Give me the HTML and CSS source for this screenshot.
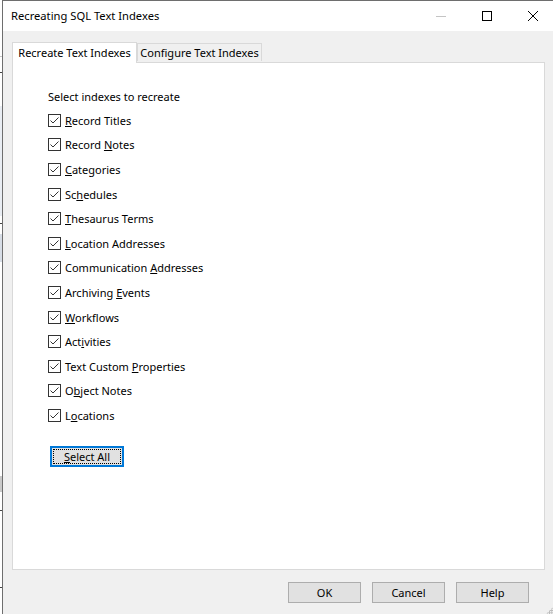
FILE: index.html
```html
<!DOCTYPE html>
<html>
<head>
<meta charset="utf-8">
<link rel="stylesheet" href="styles.css">
</head>
<body>
<div class="screen">
  <div class="outside">
    <div class="o-gap h56"></div>
    <div class="o-line"></div>
    <div class="o-gap h15"></div>
    <div class="o-dark"></div>
    <div class="o-gap h33"></div>
    <div class="o-block h110"></div>
    <div class="o-gap h7"></div>
    <div class="o-dark"></div>
    <div class="o-gap h10"></div>
    <div class="o-block2 h28"></div>
    <div class="o-gap h214"></div>
    <div class="o-block3 h15"></div>
    <div class="o-line"></div>
    <div class="o-gap h18"></div>
    <div class="o-dark"></div>
    <div class="o-gap h76"></div>
    <div class="o-dark"></div>
  </div>
  <div class="window">
    <div class="titlebar">
      <span class="title">Recreating SQL Text Indexes</span>
      <div class="caption">
        <div class="cbtn"><svg width="10" height="10" viewBox="0 0 10 10"><path d="M0 5.5H10" stroke="#c4c4c4" stroke-width="1"/></svg></div>
        <div class="cbtn"><svg width="10" height="10" viewBox="0 0 10 10"><rect x="0.5" y="0.5" width="9" height="9" fill="none" stroke="#000" stroke-width="1"/></svg></div>
        <div class="cbtn"><svg width="10" height="10" viewBox="0 0 10 10"><path d="M0 0L10 10M10 0L0 10" stroke="#000" stroke-width="1"/></svg></div>
      </div>
    </div>
    <div class="body">
      <div class="tabs">
        <div class="tab active">Recreate Text Indexes</div>
        <div class="tab">Configure Text Indexes</div>
      </div>
      <div class="panel">
        <div class="heading">Select indexes to recreate</div>
        <div class="list">
          <div class="row"><span class="box"><svg width="11" height="11" viewBox="0 0 11 11"><path d="M1.5 5.5L4 8L9.5 2.5" fill="none" stroke="#333" stroke-width="1"/></svg></span><span class="lbl"><u>R</u>ecord Titles</span></div>
          <div class="row"><span class="box"><svg width="11" height="11" viewBox="0 0 11 11"><path d="M1.5 5.5L4 8L9.5 2.5" fill="none" stroke="#333" stroke-width="1"/></svg></span><span class="lbl">Record <u>N</u>otes</span></div>
          <div class="row"><span class="box"><svg width="11" height="11" viewBox="0 0 11 11"><path d="M1.5 5.5L4 8L9.5 2.5" fill="none" stroke="#333" stroke-width="1"/></svg></span><span class="lbl"><u>C</u>ategories</span></div>
          <div class="row"><span class="box"><svg width="11" height="11" viewBox="0 0 11 11"><path d="M1.5 5.5L4 8L9.5 2.5" fill="none" stroke="#333" stroke-width="1"/></svg></span><span class="lbl">Sc<u>h</u>edules</span></div>
          <div class="row"><span class="box"><svg width="11" height="11" viewBox="0 0 11 11"><path d="M1.5 5.5L4 8L9.5 2.5" fill="none" stroke="#333" stroke-width="1"/></svg></span><span class="lbl"><u>T</u>hesaurus Terms</span></div>
          <div class="row"><span class="box"><svg width="11" height="11" viewBox="0 0 11 11"><path d="M1.5 5.5L4 8L9.5 2.5" fill="none" stroke="#333" stroke-width="1"/></svg></span><span class="lbl"><u>L</u>ocation Addresses</span></div>
          <div class="row"><span class="box"><svg width="11" height="11" viewBox="0 0 11 11"><path d="M1.5 5.5L4 8L9.5 2.5" fill="none" stroke="#333" stroke-width="1"/></svg></span><span class="lbl">Communication <u>A</u>ddresses</span></div>
          <div class="row"><span class="box"><svg width="11" height="11" viewBox="0 0 11 11"><path d="M1.5 5.5L4 8L9.5 2.5" fill="none" stroke="#333" stroke-width="1"/></svg></span><span class="lbl">Archiving <u>E</u>vents</span></div>
          <div class="row"><span class="box"><svg width="11" height="11" viewBox="0 0 11 11"><path d="M1.5 5.5L4 8L9.5 2.5" fill="none" stroke="#333" stroke-width="1"/></svg></span><span class="lbl"><u>W</u>orkflows</span></div>
          <div class="row"><span class="box"><svg width="11" height="11" viewBox="0 0 11 11"><path d="M1.5 5.5L4 8L9.5 2.5" fill="none" stroke="#333" stroke-width="1"/></svg></span><span class="lbl">Act<u>i</u>vities</span></div>
          <div class="row"><span class="box"><svg width="11" height="11" viewBox="0 0 11 11"><path d="M1.5 5.5L4 8L9.5 2.5" fill="none" stroke="#333" stroke-width="1"/></svg></span><span class="lbl">Text Custom <u>P</u>roperties</span></div>
          <div class="row"><span class="box"><svg width="11" height="11" viewBox="0 0 11 11"><path d="M1.5 5.5L4 8L9.5 2.5" fill="none" stroke="#333" stroke-width="1"/></svg></span><span class="lbl">O<u>b</u>ject Notes</span></div>
          <div class="row"><span class="box"><svg width="11" height="11" viewBox="0 0 11 11"><path d="M1.5 5.5L4 8L9.5 2.5" fill="none" stroke="#333" stroke-width="1"/></svg></span><span class="lbl">L<u>o</u>cations</span></div>
        </div>
        <div class="selectall"><span class="focus"><u>S</u>elect All</span></div>
      </div>
      <div class="buttons">
        <div class="btn">OK</div>
        <div class="btn">Cancel</div>
        <div class="btn">Help</div>
      </div>
      <div class="grip"></div>
    </div>
  </div>
</div>
</body>
</html>
```

FILE: styles.css
```css
* { box-sizing: border-box; }
html, body { margin: 0; padding: 0; }
body {
  width: 553px;
  height: 614px;
  overflow: hidden;
  font-family: "Noto Sans", "Open Sans", sans-serif;
  font-size: 11px;
  color: #000;
  background: #fff;
}
.screen {
  display: flex;
  width: 553px;
  height: 614px;
}
.outside {
  width: 2px;
  flex: none;
  display: flex;
  flex-direction: column;
  background: #fff;
}
.o-gap { flex: none; }
.o-line { height: 1px; background: #c8c8c8; }
.o-dark { height: 1px; background: #444; }
.o-block { background: #e9edf3; }
.o-block2 { background: #d7dde6; }
.o-block3 { background: #c9c9c9; }
.h7 { height: 7px; } .h10 { height: 10px; } .h15 { height: 15px; } .h18 { height: 18px; }
.h28 { height: 28px; } .h33 { height: 33px; } .h56 { height: 56px; } .h76 { height: 76px; }
.h110 { height: 110px; } .h214 { height: 214px; }

.window {
  flex: 1;
  display: flex;
  flex-direction: column;
  border-left: 1px solid #6e6e6e;
  border-top: 1px solid #6e6e6e;
  margin-right: -3px;
  min-width: 0;
}
.titlebar {
  height: 30px;
  flex: none;
  display: flex;
  align-items: center;
  background: #fff;
}
.title {
  padding-left: 8px;
  flex: 1;
  font-size: 11.2px;
  line-height: 30px;
  padding-bottom: 1px;
}
.caption { display: flex; height: 30px; }
.cbtn {
  width: 46px;
  height: 30px;
  display: flex;
  align-items: center;
  justify-content: center;
}
.cbtn svg { display: block; }

.body {
  flex: 1;
  background: #f0f0f0;
  padding: 10px 11px 0 9px;
  display: flex;
  flex-direction: column;
  position: relative;
}
.tabs {
  display: flex;
  align-items: flex-end;
  height: 21px;
  position: relative;
  z-index: 1;
}
.tab {
  height: 18px;
  padding: 0 2px;
  border: 1px solid #d9d9d9;
  border-bottom: none;
  background: #f0f0f0;
  line-height: 18px;
  white-space: nowrap;
  width: 125px;
  margin-bottom: 1px;
  text-align: center;
}
.tab.active {
  height: 21px;
  width: 125px;
  background: #fff;
  margin-bottom: -1px;
  line-height: 19px;
}
.panel {
  height: 508px;
  flex: none;
  background: #fff;
  border: 1px solid #d9d9d9;
  padding: 25px 0 0 35px;
}
.heading { line-height: 17px; height: 20px; }
.list { display: flex; flex-direction: column; }
.row {
  height: 24.6px;
  display: flex;
  align-items: center;
}
.box {
  width: 13px;
  height: 13px;
  border: 1px solid #333;
  background: #fff;
  flex: none;
  display: flex;
}
.box svg { display: block; }
.lbl { padding-left: 4px; line-height: 17px; white-space: nowrap; }
.selectall {
  margin-top: 18px;
  margin-left: 2px;
  width: 74px;
  height: 21px;
  border: 2px solid #0078d7;
  background: #e1e1e1;
  padding: 1px;
  display: flex;
}
.focus {
  flex: 1;
  border: 1px dotted #000;
  text-align: center;
  line-height: 13px;
}
.buttons {
  display: flex;
  justify-content: flex-end;
  gap: 11px;
  margin-top: 12px;
  margin-right: 16px;
}
.btn {
  width: 73px;
  height: 21px;
  border: 1px solid #adadad;
  background: #e1e1e1;
  text-align: center;
  line-height: 19px;
}
.grip {
  position: absolute;
  right: 3px;
  bottom: 0;
  width: 7px;
  height: 7px;
  background:
    radial-gradient(circle, #bcbcbc 0.8px, transparent 1px) 0 0 / 2.33px 2.33px;
  clip-path: polygon(100% 0, 100% 100%, 0 100%);
}
```
